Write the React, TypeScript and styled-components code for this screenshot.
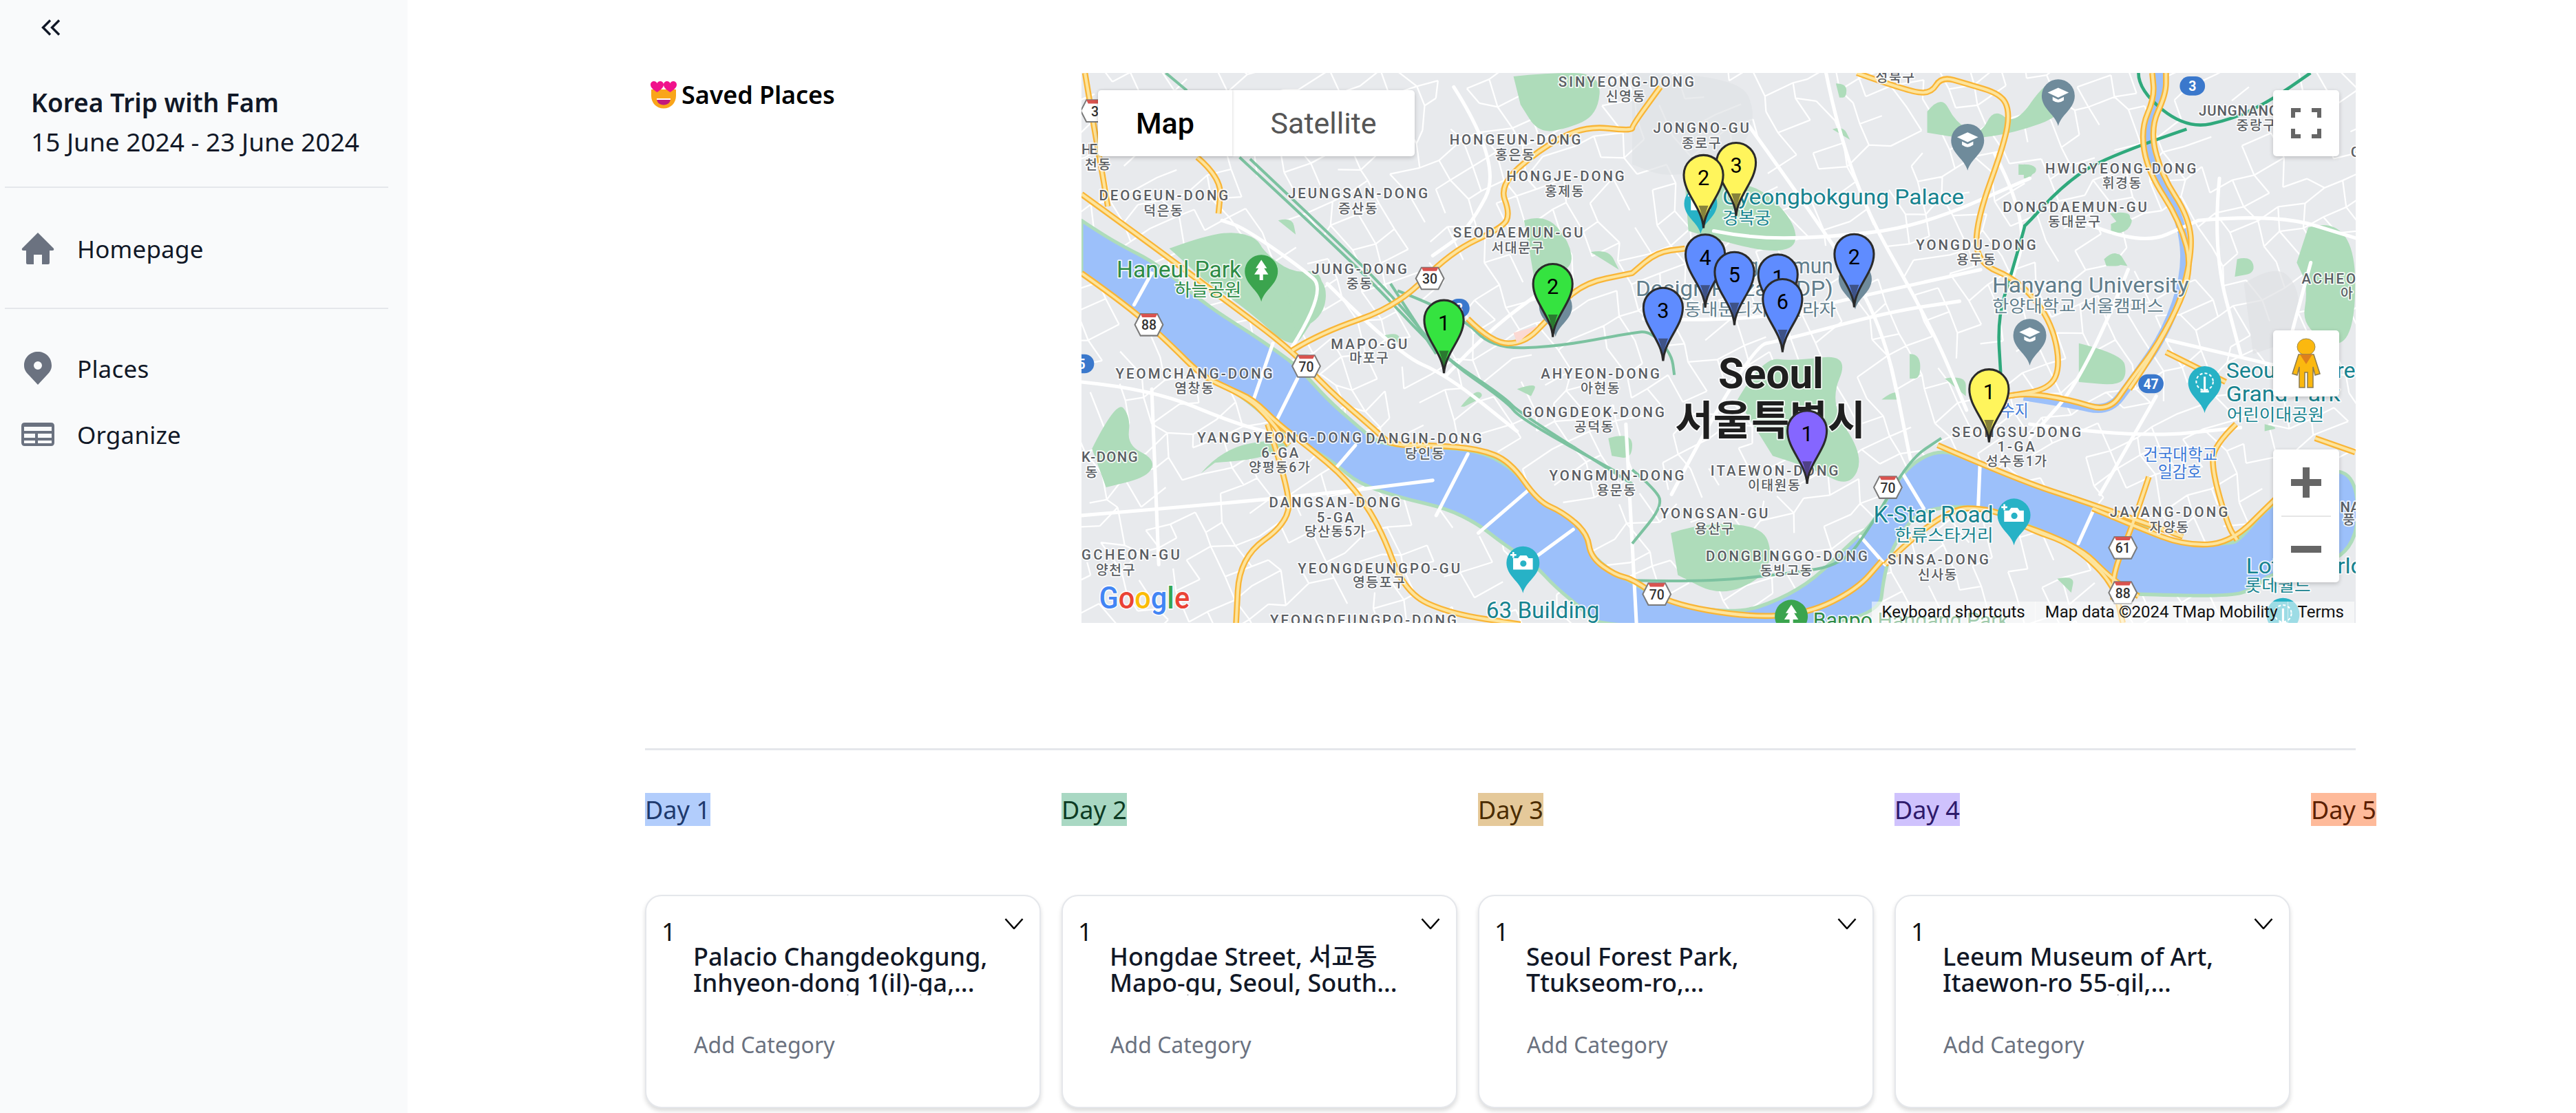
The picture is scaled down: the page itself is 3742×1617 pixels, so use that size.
import React from 'react'
import styled, { createGlobalStyle } from 'styled-components'

const GlobalStyle = createGlobalStyle`
  html, body {
    margin: 0;
    padding: 0;
    background: #fff;
  }
  body {
    font-family: "Noto Sans", "Noto Sans CJK KR", sans-serif;
    color: #111827;
  }
`

const Page = styled.div`
  display: flex;
  width: 3742px;
  height: 1617px;
  overflow: hidden;
`

const Sidebar = styled.aside`
  flex: 0 0 592px;
  background: #f9fafb;
`

const CollapseRow = styled.div`
  display: flex;
  align-items: center;
  height: 80px;
  padding: 0 0 0 60px;
  margin-bottom: 40px;
`

const TripInfo = styled.div`
  padding: 0 0 37px 45px;
  font-size: 37px;
  line-height: 57px;
`

const TripName = styled.div`
  font-weight: 600;
`

const Rule = styled.hr`
  border: 0;
  height: 2px;
  margin: 0 28px 0 7px;
  background: #e5e7eb;
`

const NavGroup = styled.nav`
  display: flex;
  flex-direction: column;
  gap: 40px;
  padding: ${p => p.$top}px 0 ${p => p.$bottom}px 31px;
`

const NavItem = styled.a`
  display: flex;
  align-items: center;
  gap: 33px;
  height: 56px;
  font-size: 35px;
  letter-spacing: 0.2px;
  color: #111827;
`

const NavIcon = styled.svg`
  flex: 0 0 48px;
  width: 48px;
  height: 48px;
  fill: #6b7280;
`

const Main = styled.main`
  flex: 1;
  min-width: 0;
  padding: 106px 0 0 345px;
`

const Content = styled.div`
  width: 2485px;
`

const TopRow = styled.section`
  display: flex;
`

const SavedHeading = styled.h2`
  display: flex;
  flex: 0 0 634px;
  align-items: flex-start;
  gap: 7px;
  box-sizing: border-box;
  margin: 0;
  padding: 12px 0 0 8px;
  font-size: 36px;
  font-weight: 600;
  line-height: 40px;
  letter-spacing: -0.1px;
  color: #000;
`

const MapFrame = styled.div`
  position: relative;
  width: 1851px;
  height: 799px;
  overflow: hidden;
  background: #e8eaed;
  font-family: Roboto, "Noto Sans CJK KR", sans-serif;
`

const MapCanvas = styled.svg`
  display: block;
  width: 1851px;
  height: 799px;
  font-family: Roboto, "Noto Sans CJK KR", sans-serif;
`

const MapLabel = styled.text`
  font-weight: ${p => p.$weight ?? 500};
  paint-order: stroke;
  stroke: #fff;
  stroke-opacity: 0.85;
  stroke-width: 7px;
  stroke-linejoin: round;
`

const MapTypeControl = styled.div`
  position: absolute;
  top: 25px;
  left: 24px;
  display: flex;
  height: 96px;
  border-radius: 5px;
  background: #fff;
  box-shadow: 0 2px 6px rgba(0, 0, 0, 0.2);
  font-size: 43px;
`

const MapTypeButton = styled.div`
  display: flex;
  align-items: center;
  justify-content: center;
  width: ${p => p.$width}px;
  color: ${p => (p.$active ? '#000' : '#565656')};
  font-weight: ${p => (p.$active ? 500 : 400)};
  box-shadow: ${p => (p.$active ? '1px 0 3px rgba(0, 0, 0, 0.12)' : 'none')};
`

const ControlBox = styled.div`
  position: absolute;
  right: 24px;
  top: ${p => p.$top}px;
  display: flex;
  align-items: center;
  justify-content: center;
  width: 96px;
  height: 96px;
  border-radius: 5px;
  background: #fff;
  box-shadow: 0 2px 6px rgba(0, 0, 0, 0.2);
`

const ZoomBox = styled.div`
  position: absolute;
  right: 24px;
  top: 547px;
  display: flex;
  flex-direction: column;
  width: 96px;
  height: 193px;
  border-radius: 5px;
  background: #fff;
  box-shadow: 0 2px 6px rgba(0, 0, 0, 0.2);
`

const ZoomCell = styled.div`
  flex: 1;
  display: flex;
  align-items: center;
  justify-content: center;
`

const ZoomRule = styled.div`
  height: 2px;
  margin: 0 12px;
  background: #e6e6e6;
`

const Attribution = styled.div`
  position: absolute;
  right: 0;
  bottom: 0;
  display: flex;
  height: 31px;
  align-items: center;
  padding-right: 2px;
  font-size: 24px;
  color: #111;
  white-space: nowrap;
`

const AttributionItem = styled.span`
  padding: 0 15px;
  line-height: 31px;
  background: rgba(255, 255, 255, 0.55);
  margin-left: ${p => (p.$first ? '0' : '-1px')};
`

const SectionRule = styled.div`
  height: 3px;
  margin-top: 182px;
  background: #e5e7eb;
`

const DayGrid = styled.div`
  display: grid;
  grid-template-columns: repeat(5, 575px);
  column-gap: 30px;
  margin-top: ${p => p.$top}px;
`

const DayTag = styled.span`
  justify-self: start;
  height: 48px;
  font-size: 36px;
  line-height: 50px;
  background: ${p => p.$bg};
  color: ${p => p.$fg};
  white-space: nowrap;
`

const PlaceCard = styled.article`
  box-sizing: border-box;
  height: 310px;
  padding: 28px 23px 0 22px;
  border: 2px solid #e5e7eb;
  border-radius: 24px;
  background: #fff;
  box-shadow: 0 4px 6px rgba(0, 0, 0, 0.14);
`

const CardHeader = styled.div`
  display: flex;
  justify-content: space-between;
  height: 41px;
  font-size: 36px;
  line-height: 48px;
  color: #111;
`

const CardToggle = styled.svg`
  width: 28px;
  height: 16px;
  margin-top: 4px;
  fill: none;
  stroke: #000;
  stroke-width: 2.5;
`

const CardTitle = styled.div`
  height: 75px;
  margin-left: 46px;
  overflow: hidden;
  font-size: 36px;
  font-weight: 500;
  line-height: 38px;
  white-space: nowrap;
`

const TitleLine = styled.div`
  display: block;
`

const AddCategory = styled.div`
  margin: 48px 0 0 47px;
  font-size: 32px;
  line-height: 48px;
  color: #6b7280;
`

type Pt = number[]
const B = (p: Pt[]) => p.map(([x, y]) => [x + 1568, y])
const C = (p: Pt[]) => p.map(([x, y]) => [2683 + 0.653 * x, y])

function smooth(p: Pt[]) {
  let d = `M${p[0][0]},${p[0][1]}`
  for (let i = 1; i < p.length - 1; i++) {
    const mx = (p[i][0] + p[i + 1][0]) / 2
    const my = (p[i][1] + p[i + 1][1]) / 2
    d += `Q${p[i][0]},${p[i][1]} ${mx},${my}`
  }
  const last = p[p.length - 1]
  return d + `L${last[0]},${last[1]}`
}

// minor streets, a jittered lattice turned a little off north
function buildStreets() {
  let seed = 20240615
  const rnd = () => {
    seed = (seed * 1664525 + 1013904223) % 4294967296
    return seed / 4294967296
  }
  const step = 70
  const nodes: Pt[][] = []
  const cos = Math.cos(-0.42)
  const sin = Math.sin(-0.42)
  for (let i = 0; i < 72; i++) {
    const row: Pt[] = []
    for (let j = 0; j < 72; j++) {
      const u = (i - 14) * step + (rnd() - 0.5) * 40
      const v = (j - 32) * step + (rnd() - 0.5) * 40
      row.push([u * cos - v * sin, u * sin + v * cos])
    }
    nodes.push(row)
  }
  let d = ''
  for (let i = 0; i < 71; i++) {
    for (let j = 0; j < 71; j++) {
      const n = nodes[i][j]
      if (rnd() < 0.58) d += `M${n[0].toFixed(0)},${n[1].toFixed(0)}L${nodes[i + 1][j][0].toFixed(0)},${nodes[i + 1][j][1].toFixed(0)}`
      if (rnd() < 0.58) d += `M${n[0].toFixed(0)},${n[1].toFixed(0)}L${nodes[i][j + 1][0].toFixed(0)},${nodes[i][j + 1][1].toFixed(0)}`
    }
  }
  return d
}
const STREETS = buildStreets()

const RIVER: Pt[] = [
  [0, 420], [60, 460], [130, 500], [190, 530], [260, 580], [330, 640], [400, 690], [480, 740], [560, 795], [620, 840], [700, 930], [780, 1000], [850, 1060],
  [1000, 1065], [1130, 1075], [1220, 1120], [1280, 1190], [1310, 1225], [1370, 1250], [1430, 1300], [1450, 1370], [1510, 1420], [1568, 1450],
  ...B([[100, 1510], [300, 1540], [420, 1500], [520, 1440], [620, 1340], [690, 1280], [770, 1130], [870, 1070], [960, 1100], [1100, 1160], [1300, 1220], [1568, 1325]]),
  ...C([[300, 1240], [500, 1300], [700, 1345], [900, 1340], [940, 1330], [1085, 1220], [1445, 1090]]),
  [3640, 1380], ...C([[1085, 1420], [1000, 1470], [900, 1490], [500, 1485]]),
  ...B([[1397, 1480], [1370, 1440], [1250, 1340], [1130, 1290], [1000, 1232], [830, 1240], [770, 1300], [720, 1400], [700, 1580]]),
  [1480, 1580], [1430, 1530], [1350, 1465], [1290, 1400], [1200, 1340], [1130, 1285], [1040, 1240], [910, 1210], [790, 1170], [720, 1110], [640, 1060], [560, 1010], [470, 930], [410, 895], [330, 850], [250, 770], [135, 665], [0, 570],
]

const TRIBUTARY: Pt[] = C([[0, 920], [200, 940], [370, 965], [470, 880], [620, 740], [710, 570], [690, 420], [570, 290], [530, 160], [590, 70], [590, 0]])

const HIGHWAYS: Pt[][] = [
  [[0, 345], [200, 490], [400, 640], [600, 790], [700, 900], [840, 1020], [880, 1060], [1000, 1060], [1130, 1070], [1220, 1105], [1300, 1220], [1370, 1250], [1440, 1310], [1450, 1380], [1520, 1430], [1568, 1440], ...B([[100, 1510], [330, 1550], [500, 1540], [640, 1470], [710, 1390]])],
  [[0, 570], [135, 665], [250, 770], [340, 860], [410, 895], [490, 930], [560, 1000], [640, 1060], [760, 1160], [850, 1290], [920, 1480], [1050, 1540], [1250, 1570]],
  [[530, 1000], [590, 1180], [590, 1280], [450, 1380], [440, 1570]],
  [[600, 790], [680, 740], [900, 665], [1050, 510], [1200, 440], [1220, 400], [1190, 320], [1300, 220], [1430, 150], [1568, 165], ...B([[0, 150], [80, 40]])],
  [[1100, 700], [1170, 770], [1260, 770], [1330, 700], [1420, 600], [1568, 570], ...B([[0, 570], [70, 510], [150, 500]])],
  [[10, 0], [40, 180], [60, 290], [75, 380]],
  [[330, 240], [400, 300], [390, 400]],
  B([[640, 0], [780, 50], [850, 60], [880, 10], [950, 30], [1050, 60], [1075, 110], [1060, 200], [980, 420], [980, 540], [1100, 590], [1190, 700], [1220, 830], [1190, 900], [1070, 920]]),
  [...B([[1070, 920]]), ...C([[0, 910], [200, 930], [370, 965], [460, 880], [600, 760], [740, 570], [680, 420], [540, 280], [510, 160], [570, 70], [560, 0]])],
  C([[460, 900], [650, 720], [735, 520], [720, 410], [600, 290], [550, 160], [620, 60], [620, 0]]),
  C([[620, 795], [880, 880]]),
  C([[925, 1000], [830, 1060], [820, 1130], [890, 1290], [930, 1330]]),
  B([[870, 1060], [1100, 1160], [1300, 1225], [1568, 1320]]),
  C([[300, 1240], [500, 1295], [700, 1345], [900, 1340], [1085, 1220], [1280, 1100]]),
  C([[1270, 1040], [1445, 1080]]),
  C([[545, 1150], [480, 1280], [390, 1420], [390, 1500]]),
  B([[720, 1400], [880, 1240], [1030, 1240], [1130, 1300], [1250, 1340], [1370, 1450], [1397, 1566]]),
  C([[0, 1290], [230, 1340], [380, 1440], [500, 1490]]),
  [[380, 880], [470, 920], [540, 990], [590, 1060]],
]

const WHITE_ROADS: Pt[][] = [
  [[200, 570], [150, 660]], [[545, 770], [490, 930]], [[615, 870], [555, 990]], [[780, 1060], [720, 1130]], [[1100, 1085], [1010, 1260]], [[1270, 1190], [1130, 1310]], [[1400, 1300], [1250, 1410]],
  B([[770, 1140], [830, 1240]]), B([[650, 1320], [720, 1400]]), B([[990, 1120], [985, 1240]]), B([[1320, 1230], [1270, 1340]]),
  [[600, 780], [700, 620], [620, 550], [460, 440], [400, 420]], [[700, 600], [900, 800], [1040, 860], [1240, 1020]], [[1040, 860], [1150, 740], [1340, 600]],
  [[0, 880], [200, 900], [440, 1000], [600, 1040]], [[200, 900], [220, 1400]], [[0, 1260], [600, 1210], [1000, 1160]], [[1060, 40], [1200, 260], [1100, 450], [1000, 520]],
  [[1550, 1000], [1580, 1566]], [[1680, 1200], [1900, 780], [2000, 760], [2300, 680], [2500, 650]], [[1600, 700], [1900, 710], [2200, 640], [2560, 560]],
  [[1900, 150], [2080, 400], [2280, 700], [2360, 1100]], [[2120, 0], [2180, 300], [2420, 720], [2520, 960]], [[2600, 230], [2700, 420], [2640, 620]], [[2800, 400], [3000, 500], [3180, 420]],
  [[2700, 1000], [3000, 1040], [3300, 1010]], [[2980, 560], [2860, 860], [2700, 1040]], [[3180, 420], [3400, 400], [3628, 470]], [[3240, 300], [3220, 500], [3300, 800]], [[3090, 760], [3260, 800], [3430, 840]],
  [[3060, 920], [2900, 1200]], [[3500, 540], [3430, 800]], [[1800, 450], [1900, 470], [2100, 470], [2380, 440], [2700, 300]],
]

const SUBWAY_LIGHT: Pt[][] = [
  [[240, 0], [300, 50]],
  [[450, 240], [720, 490], [870, 640], [1020, 800], [1200, 920], [1250, 970], [1568, 1170]],
  [[480, 245], [740, 490], [900, 650], [1030, 810], [1210, 935], [1250, 985], [1530, 1140]],
  [[880, 600], [1010, 800]],
  [[900, 620], [1080, 690], [1170, 785], [1350, 780], [1568, 740], [1620, 735], [1680, 800], [1688, 860]],
  B([[0, 1445], [200, 1450], [450, 1425], [600, 1400], [680, 1290], [790, 1100], [880, 1040]]),
  B([[0, 1130], [60, 1180], [90, 1230], [0, 1340]]),
]

const SUBWAY_DARK: Pt[][] = [
  C([[500, 0], [500, 50], [710, 160], [920, 130], [1085, 75], [1250, 0]]),
  [...C([[710, 160], [350, 240], [170, 320], [0, 440]]), ...B([[1120, 430], [1080, 570], [1040, 700], [1050, 870]])],
]

const PARKS: Pt[][] = [
  [[250, 500], [330, 470], [430, 450], [500, 470], [520, 510], [600, 570], [680, 560], [690, 640], [650, 720], [600, 790], [480, 680], [350, 590]],
  [[1230, 10], [1320, 0], [1480, 0], [1470, 120], [1380, 160], [1300, 170], [1250, 90]],
  [[1260, 420], [1320, 400], [1390, 480], [1400, 560], [1290, 590]],
  [[30, 1070], [100, 930], [140, 980], [130, 1060], [210, 1100], [190, 1150], [70, 1180]],
  [[340, 1140], [400, 1070], [560, 1040], [610, 1060], [500, 1100], [380, 1110]],
  [[1080, 950], [1120, 900], [1150, 920], [1090, 950]], [[1240, 900], [1300, 880], [1280, 920]], [[850, 750], [900, 735], [910, 770]],
  [[560, 420], [600, 410], [610, 460]], [[580, 590], [640, 560], [700, 600], [690, 690], [610, 740]],
  [[1500, 1040], [1568, 1020], [1568, 1100], [1510, 1090]], [[1450, 510], [1500, 500], [1530, 560]],
  B([[150, 310], [240, 310], [360, 320], [460, 420], [470, 500], [370, 510], [160, 450]]),
  B([[300, 930], [370, 810], [460, 820], [620, 800], [560, 940], [660, 1090], [620, 1180], [520, 1130], [400, 1090]]),
  B([[110, 1310], [200, 1280], [370, 1290], [400, 1370], [370, 1440], [250, 1490], [130, 1430]]),
  B([[840, 110], [880, 60], [920, 140], [990, 180], [1030, 100], [1090, 150], [1180, 20], [1250, 20], [1230, 120], [1090, 170], [960, 190], [840, 170]]),
  B([[890, 870], [950, 860], [950, 920]]), B([[710, 930], [750, 900], [760, 930]]), B([[790, 800], [820, 800], [820, 870], [790, 870]]),
  B([[1100, 260], [1150, 260], [1150, 290], [1100, 290]]), B([[1350, 540], [1380, 500], [1410, 550]]), B([[1360, 400], [1430, 390], [1400, 450]]),
  B([[1210, 1440], [1260, 1430], [1250, 1480]]), B([[580, 30], [610, 30], [610, 70], [590, 70]]), B([[570, 160], [600, 150], [620, 190]]),
  C([[240, 770], [430, 800], [450, 860], [410, 890], [240, 880]]),
  C([[1240, 440], [1445, 400], [1445, 800], [1210, 730], [1240, 610], [1190, 540]]),
  C([[380, 430], [480, 400], [460, 450], [380, 460]]), C([[930, 530], [990, 520], [1010, 570], [920, 580]]), C([[0, 260], [60, 260], [30, 300], [0, 300]]),
  C([[350, 530], [400, 500], [440, 550], [360, 550]]), C([[1050, 1000], [1120, 1010], [1050, 1020]]),
]

const DISTRICTS: [string, number, number, number][] = [
  ['HE', 0, 45, 232], ['DEOGEUN-DONG', 50, 418, 362], ['JEUNGSAN-DONG', 588, 986, 357], ['HONGEUN-DONG', 1048, 1422, 204],
  ['HONGJE-DONG', 1210, 1546, 308], ['SEODAEMUN-GU', 1058, 1428, 468], ['JUNG-DONG', 655, 927, 573], ['MAPO-GU', 710, 928, 785],
  ['YEOMCHANG-DONG', 97, 544, 870], ['AHYEON-DONG', 1308, 1646, 870], ['GONGDEOK-DONG', 1256, 1660, 980], ['YANGPYEONG-DONG', 330, 798, 1053],
  ['DANGIN-DONG', 810, 1140, 1055], ['K-DONG', 0, 160, 1108], ['YONGMUN-DONG', 1332, 1716, 1160], ['DANGSAN-DONG', 534, 908, 1236],
  ['GCHEON-GU', 0, 280, 1385], ['YEONGDEUNGPO-GU', 616, 1078, 1424], ['YEONGDEUNGPO-DONG', 537, 1068, 1572], ['SINYEONG-DONG', 1358, 1744, 40],
  ['JONGNO-GU', 1628, 1901, 171], ['HWIGYEONG-DONG', 2744, 3174, 286], ['DONGDAEMUN-GU', 2623, 3034, 395], ['YONGDU-DONG', 2376, 2718, 503],
  ['ITAEWON-DONG', 1791, 2155, 1147], ['YONGSAN-GU', 1648, 1955, 1269], ['DONGBINGGO-DONG', 1778, 2238, 1390], ['SEONGSU-DONG', 2478, 2846, 1037],
  ['SINSA-DONG', 2295, 2583, 1400], ['JAYANG-DONG', 2928, 3264, 1265], ['JUNGNANG-GU', 3181, 3480, 122], ['ACHEO', 3474, 3628, 600],
  ['6-GA', 512, 618, 1096], ['5-GA', 670, 776, 1280], ['1-GA', 2608, 2714, 1078], ['G', 3614, 3640, 240], ['NA', 3584, 3640, 1250],
]

const KOREAN: [string, number, number][] = [
  ['천동', 48, 275], ['덕은동', 234, 405], ['증산동', 788, 400], ['홍은동', 1235, 247], ['홍제동', 1376, 351], ['서대문구', 1243, 511], ['중동', 792, 614],
  ['마포구', 820, 826], ['염창동', 322, 911], ['아현동', 1478, 911], ['공덕동', 1460, 1021], ['양평동6가', 565, 1137], ['당인동', 978, 1097], ['동', 30, 1150],
  ['용문동', 1524, 1202], ['당산동5가', 723, 1320], ['양천구', 98, 1428], ['영등포구', 848, 1465], ['신영동', 1550, 80], ['종로구', 1766, 213], ['성북구', 2318, 25],
  ['휘경동', 2963, 328], ['동대문구', 2828, 437], ['용두동', 2548, 545], ['이태원동', 1973, 1188], ['용산구', 1803, 1311], ['동빙고동', 2008, 1431], ['성수동1가', 2663, 1120],
  ['신사동', 2438, 1442], ['자양동', 3098, 1307], ['중랑구', 3345, 163], ['아', 3604, 640], ['풍', 3610, 1285],
]

const POI_LABELS: [string, number, number, number, string, number][] = [
  ['Haneul Park', 100, 455, 583, '#2e8b46', 66], ['하늘공원', 265, 455, 635, '#2e8b46', 48],
  ['Gyeongbokgung Palace', 1825, 2513, 375, '#16838f', 60], ['경복궁', 1825, 1963, 430, '#16838f', 46],
  ['Dongdaemun', 1790, 2140, 570, '#607d8b', 60], ['Design Plaza (DDP)', 1578, 2140, 635, '#607d8b', 60], ['동대문디자인플라자', 1716, 2148, 690, '#607d8b', 46],
  ['Hanyang University', 2593, 3153, 625, '#607d8b', 60], ['한양대학교 서울캠퍼스', 2593, 3081, 680, '#607d8b', 46],
  ['유수지', 2580, 2696, 978, '#3b78d8', 46], ['건국대학교', 3023, 3234, 1103, '#3b78d8', 46], ['일감호', 3065, 3189, 1153, '#3b78d8', 46],
  ['Seoul Childre', 3259, 3627, 868, '#16838f', 60], ['Grand Park', 3259, 3584, 935, '#16838f', 60], ['어린이대공원', 3261, 3538, 990, '#16838f', 46],
  ['K-Star Road', 2255, 2596, 1280, '#16838f', 64], ['한류스타거리', 2316, 2596, 1333, '#16838f', 46], ['63 Building', 1152, 1475, 1553, '#16838f', 66],
  ['Banpo Hangang Park', 2083, 2640, 1580, '#2e8b46', 62], ['Lotte World', 3316, 3650, 1425, '#16838f', 62], ['롯데월드', 3313, 3500, 1475, '#16838f', 46],
]

const SHIELDS: [number, number, string][] = [
  [38, 108, '3'], [992, 585, '30'], [192, 717, '88'], [640, 835, '70'], [2296, 1180, '70'], [1638, 1484, '70'], [2965, 1352, '61'], [2965, 1480, '88'], [3512, 1105, ''],
]

const ROUTES: [number, number, string, number][] = [[3045, 885, '47', 72], [3163, 37, '3', 72], [0, 828, '5', 72], [1075, 670, '3', 60]]

const POI_PINS: [number, number, string, string][] = [
  [512, 518, '#3ba44e', 'tree'], [2523, 145, '#6f8b9b', 'cap'], [2781, 18, '#6f8b9b', 'cap'], [2700, 700, '#6f8b9b', 'cap'], [1350, 618, '#6f8b9b', 'cap'], [2203, 540, '#6f8b9b', 'cap'],
  [1257, 1348, '#27b2c6', 'camera'], [2655, 1212, '#27b2c6', 'camera'], [3198, 835, '#27b2c6', 'wheel'], [1763, 325, '#27b2c6', 'camera'], [2021, 1500, '#3ba44e', 'tree'], [3421, 1495, '#27b2c6', 'wheel'],
]

const MARKERS: [number, number, string, string][] = [
  [1032, 645, '1', '#35e340'], [1342, 542, '2', '#35e340'], [1864, 197, '3', '#fff55c'], [1771, 232, '2', '#fff55c'], [1776, 458, '4', '#5f8cff'], [1983, 515, '1', '#5f8cff'],
  [1859, 508, '5', '#5f8cff'], [1996, 585, '6', '#5f8cff'], [2200, 457, '2', '#5f8cff'], [1656, 610, '3', '#5f8cff'], [2066, 960, '1', '#8566ff'], [2584, 842, '1', '#fff55c'],
]

function PoiGlyph({ kind }: { kind: string }) {
  if (kind === 'tree') return <path d="M0 14 L16 38 H8 L20 56 H5 V72 H-5 V56 H-20 L-8 38 H-16Z" fill="#fff" />
  if (kind === 'camera') {
    return (
      <g fill="#fff">
        <path d="M-28 34 H-14 L-8 26 H10 L16 34 H28 V66 H-28Z" />
        <circle cx="1" cy="49" r="9" fill="#27b2c6" />
        <path d="M-36 22 h6 v-6 h5 v6 h6 v5 h-6 v6 h-5 v-6 h-6z" />
      </g>
    )
  }
  if (kind === 'wheel') {
    return (
      <g fill="none" stroke="#fff" strokeWidth="4">
        <circle cx="0" cy="44" r="24" strokeDasharray="8 6" />
        <path d="M0 30 V72 M-12 72 H12" strokeWidth="6" />
      </g>
    )
  }
  return (
    <g fill="#fff">
      <path d="M-30 38 L0 24 L30 38 L0 52Z" />
      <path d="M-16 50 L0 58 L16 50 V60 Q0 72 -16 60Z" />
    </g>
  )
}

function PoiPin({ x, top, color, kind }: { x: number; top: number; color: string; kind: string }) {
  return (
    <g transform={`translate(${x},${top})`}>
      <path d="M0 133 C-8 100 -47 84 -47 47 A47 47 0 1 1 47 47 C47 84 8 100 0 133Z" fill={color} />
      <PoiGlyph kind={kind} />
    </g>
  )
}

function Marker({ x, top, label, color }: { x: number; top: number; label: string; color: string }) {
  return (
    <g transform={`translate(${x},${top})`}>
      <path d="M0 210 C-4 150 -56 112 -56 58 A56 56 0 1 1 56 58 C56 112 4 150 0 210Z" fill={color} stroke="#2b2b2b" strokeWidth="6" />
      <path d="M0 210 C-2 180 -8 160 -14 146 L14 146 C8 160 2 180 0 210Z" fill="#222" opacity="0.55" />
      <text x="0" y="88" textAnchor="middle" fontSize="60" fill="#000">{label}</text>
    </g>
  )
}

function Shield({ x, y, label }: { x: number; y: number; label: string }) {
  return (
    <g transform={`translate(${x},${y})`}>
      <polygon points="-40,0 -24,-31 24,-31 40,0 24,31 -24,31" fill="#fff" stroke="#7a7a7a" strokeWidth="4" />
      <polygon points="-24,-31 24,-31 19,-21 -19,-21" fill="#d9534f" />
      <text x="0" y="15" textAnchor="middle" fontSize="38" fontWeight="500" fill="#333">{label}</text>
    </g>
  )
}

function SeoulMap() {
  return (
    <MapCanvas viewBox="0 0 3628 1566" preserveAspectRatio="none">
      <rect width="3628" height="1566" fill="#e8eaed" />
      <path d={STREETS} fill="none" stroke="#fff" strokeWidth="4.5" />
      <path d={smooth(B([[0, 0], [300, 0], [360, 130], [280, 260], [100, 300], [0, 260]]))} fill="#e0e2e5" opacity="0.7" />
      <path d={smooth(C([[960, 600], [1100, 540], [1210, 620], [1180, 760], [1000, 800]]))} fill="#dfe1e4" opacity="0.7" />
      <g fill="#aedcba">
        {PARKS.map((p, i) => <path key={i} d={smooth(p) + 'Z'} />)}
      </g>
      <path d={smooth(RIVER) + 'Z'} fill="#9cc0fa" stroke="#aedcba" strokeWidth="10" strokeLinejoin="round" />
      <path d={smooth(TRIBUTARY)} fill="none" stroke="#9cc0fa" strokeWidth="26" />
      <g fill="none" stroke="#fff" strokeWidth="10" strokeLinecap="round">
        {WHITE_ROADS.map((p, i) => <path key={i} d={smooth(p)} />)}
      </g>
      <g fill="none" stroke="#7cc2a0" strokeWidth="8">
        {SUBWAY_LIGHT.map((p, i) => <path key={i} d={smooth(p)} />)}
      </g>
      <g fill="none" stroke="#2fa97c" strokeWidth="9">
        {SUBWAY_DARK.map((p, i) => <path key={i} d={smooth(p)} />)}
      </g>
      <g fill="none" stroke="#f9b536" strokeWidth="17" strokeLinejoin="round">
        {HIGHWAYS.map((p, i) => <path key={i} d={smooth(p)} />)}
      </g>
      <g fill="none" stroke="#fde49c" strokeWidth="8" strokeLinejoin="round">
        {HIGHWAYS.map((p, i) => <path key={i} d={smooth(p)} />)}
      </g>
      <path d="M1240 770 L1300 720 L1230 740Z M2030 1000 L2100 1000 L2050 960Z" fill="#fbd9d3" />
      {SHIELDS.map(([x, y, t], i) => <Shield key={i} x={x} y={y} label={t} />)}
      {ROUTES.map(([x, y, t, w], i) => (
        <g key={i}>
          <rect x={x - w / 2} y={y - 27} width={w} height="54" rx="27" fill="#3a78cc" />
          <text x={x} y={y + 14} textAnchor="middle" fontSize="38" fontWeight="700" fill="#fff">{t}</text>
        </g>
      ))}
      {DISTRICTS.map(([t, x1, x2, y], i) => (
        <MapLabel key={i} x={x1} y={y} fontSize="40" fill="#5a5e63" textLength={x2 - x1} lengthAdjust="spacing">{t}</MapLabel>
      ))}
      {KOREAN.map(([t, x, y], i) => (
        <MapLabel key={i} x={x} y={y} fontSize="38" letterSpacing="3" fill="#5a5e63" textAnchor="middle">{t}</MapLabel>
      ))}
      {POI_LABELS.map(([t, x1, x2, y, fill, size], i) => (
        <MapLabel key={i} $weight={400} x={x1} y={y} fontSize={size} fill={fill} textLength={x2 - x1} lengthAdjust="spacingAndGlyphs">{t}</MapLabel>
      ))}
      <MapLabel $weight={700} x="1813" y="898" fontSize="118" fill="#1f1f1f" textLength="300" lengthAdjust="spacingAndGlyphs">Seoul</MapLabel>
      <MapLabel $weight={700} x="1690" y="1030" fontSize="116" fill="#1f1f1f" textLength="543" lengthAdjust="spacingAndGlyphs">서울특별시</MapLabel>
      {POI_PINS.map(([x, top, color, kind], i) => <PoiPin key={i} x={x} top={top} color={color} kind={kind} />)}
      {MARKERS.map(([x, top, t, color], i) => <Marker key={i} x={x} top={top} label={t} color={color} />)}
      <MapLabel x="50" y="1525" fontSize="88" textLength="258" lengthAdjust="spacingAndGlyphs">
        <tspan fill="#4285f4">G</tspan><tspan fill="#ea4335">o</tspan><tspan fill="#fbbc05">o</tspan><tspan fill="#4285f4">g</tspan><tspan fill="#34a853">l</tspan><tspan fill="#ea4335">e</tspan>
      </MapLabel>
    </MapCanvas>
  )
}

function HeartEyes() {
  return (
    <svg width="38" height="40" viewBox="0 0 38 40">
      <path d="M1 12 H37 V21 C37 32 29 39.5 19 39.5 C9 39.5 1 32 1 21Z" fill="#f9a51a" />
      <path d="M9 25 H29 C29 31 25 34.5 19 34.5 C13 34.5 9 31 9 25Z" fill="#c2187c" />
      <path d="M9 25 H29 V27 H9Z" fill="#fff" />
      <path d="M9.5 16 C3 12 0 8.5 0 5 C0 1.5 2.5 0 5 0 C7 0 8.7 1 9.5 3 C10.3 1 12 0 14 0 C16.5 0 19 1.5 19 5 C19 8.5 16 12 9.5 16Z" fill="#f0128c" />
      <path d="M28.5 16 C22 12 19 8.5 19 5 C19 1.5 21.5 0 24 0 C26 0 27.7 1 28.5 3 C29.3 1 31 0 33 0 C35.5 0 38 1.5 38 5 C38 8.5 35 12 28.5 16Z" fill="#f0128c" />
    </svg>
  )
}

const DAYS = [
  { label: 'Day 1', bg: '#b2cdfc', fg: '#1e3a6e' },
  { label: 'Day 2', bg: '#a9d8c3', fg: '#0d3b24' },
  { label: 'Day 3', bg: '#e5c99a', fg: '#4a2c00' },
  { label: 'Day 4', bg: '#cfc2fd', fg: '#2e1a6b' },
  { label: 'Day 5', bg: '#feba9a', fg: '#5c2000' },
]

const PLACES = [
  ['Palacio Changdeokgung,', 'Inhyeon-dong 1(il)-ga,...'],
  ['Hongdae Street, 서교동', 'Mapo-gu, Seoul, South...'],
  ['Seoul Forest Park,', 'Ttukseom-ro,...'],
  ['Leeum Museum of Art,', 'Itaewon-ro 55-gil,...'],
]

export default function App() {
  return (
    <Page>
      <GlobalStyle />
      <Sidebar>
        <CollapseRow>
          <svg width="28" height="24" viewBox="0 0 28 24" fill="none" stroke="#111827" strokeWidth="3.4">
            <path d="M13 1.5 L2.5 12 L13 22.5 M26 1.5 L15.5 12 L26 22.5" />
          </svg>
        </CollapseRow>
        <TripInfo>
          <TripName>Korea Trip with Fam</TripName>
          <div>15 June 2024 - 23 June 2024</div>
        </TripInfo>
        <Rule />
        <NavGroup $top={60} $bottom={58}>
          <NavItem>
            <NavIcon viewBox="0 0 48 48">
              <path d="M24 1 L47 24 Q48 27 45 27 H41 V45 Q41 47 39 47 H30 V33 H18 V47 H9 Q7 47 7 45 V27 H3 Q0 27 1 24Z" />
            </NavIcon>
            Homepage
          </NavItem>
        </NavGroup>
        <Rule />
        <NavGroup $top={58} $bottom={0}>
          <NavItem>
            <NavIcon viewBox="0 0 48 48">
              <path fillRule="evenodd" d="M24 0 C35 0 44 8 44 20 C44 26 41 30 37 34 L24 48 L11 34 C7 30 4 26 4 20 C4 8 13 0 24 0Z M24 14 A6 6 0 1 0 24 26 A6 6 0 1 0 24 14Z" />
            </NavIcon>
            Places
          </NavItem>
          <NavItem>
            <NavIcon viewBox="0 0 48 48">
              <path fillRule="evenodd" d="M5 7 H43 Q48 7 48 12 V36 Q48 41 43 41 H5 Q0 41 0 36 V12 Q0 7 5 7Z M4 13 V19 H44 V13Z M4 23 V29 H20 V23Z M24 23 V29 H44 V23Z M4 33 V37 H20 V33Z M24 33 V37 H44 V33Z" />
            </NavIcon>
            Organize
          </NavItem>
        </NavGroup>
      </Sidebar>
      <Main>
        <Content>
          <TopRow>
            <SavedHeading>
              <HeartEyes />
              <span>Saved Places</span>
            </SavedHeading>
            <MapFrame>
              <SeoulMap />
              <MapTypeControl>
                <MapTypeButton $active $width={195}>Map</MapTypeButton>
                <MapTypeButton $width={265}>Satellite</MapTypeButton>
              </MapTypeControl>
              <ControlBox $top={25}>
                <svg width="44" height="44" viewBox="0 0 44 44" fill="none" stroke="#666" strokeWidth="6">
                  <path d="M14 3 H3 V14 M30 3 H41 V14 M14 41 H3 V30 M30 41 H41 V30" />
                </svg>
              </ControlBox>
              <ControlBox $top={374}>
                <svg width="42" height="74" viewBox="0 0 42 74">
                  <ellipse cx="21" cy="13" rx="13" ry="12" fill="#fbb80f" stroke="#9a8a55" strokeWidth="1" />
                  <path d="M10 24 H32 L41 52 L34 54 L31 42 V72 H23 V50 H19 V72 H11 V42 L8 54 L1 52Z" fill="#fbb80f" stroke="#8a7a50" strokeWidth="1.5" />
                  <path d="M12 24 H30 L21 38Z" fill="#de7f1c" />
                </svg>
              </ControlBox>
              <ZoomBox>
                <ZoomCell>
                  <svg width="44" height="44" viewBox="0 0 44 44" fill="#666">
                    <path d="M17 0 H27 V17 H44 V27 H27 V44 H17 V27 H0 V17 H17Z" />
                  </svg>
                </ZoomCell>
                <ZoomRule />
                <ZoomCell>
                  <svg width="44" height="10" viewBox="0 0 44 10" fill="#666">
                    <rect width="44" height="10" />
                  </svg>
                </ZoomCell>
              </ZoomBox>
              <Attribution>
                <AttributionItem $first>Keyboard shortcuts</AttributionItem>
                <AttributionItem>Map data ©2024 TMap Mobility</AttributionItem>
                <AttributionItem>Terms</AttributionItem>
              </Attribution>
            </MapFrame>
          </TopRow>
          <SectionRule />
          <DayGrid $top={62}>
            {DAYS.map(d => <DayTag key={d.label} $bg={d.bg} $fg={d.fg}>{d.label}</DayTag>)}
          </DayGrid>
          <DayGrid $top={100}>
            {PLACES.map(lines => (
              <PlaceCard key={lines[0]}>
                <CardHeader>
                  <span>1</span>
                  <CardToggle viewBox="0 0 28 16">
                    <path d="M1.5 1 L14 15 L26.5 1" />
                  </CardToggle>
                </CardHeader>
                <CardTitle>
                  {lines.map(line => <TitleLine key={line}>{line}</TitleLine>)}
                </CardTitle>
                <AddCategory>Add Category</AddCategory>
              </PlaceCard>
            ))}
          </DayGrid>
        </Content>
      </Main>
    </Page>
  )
}
